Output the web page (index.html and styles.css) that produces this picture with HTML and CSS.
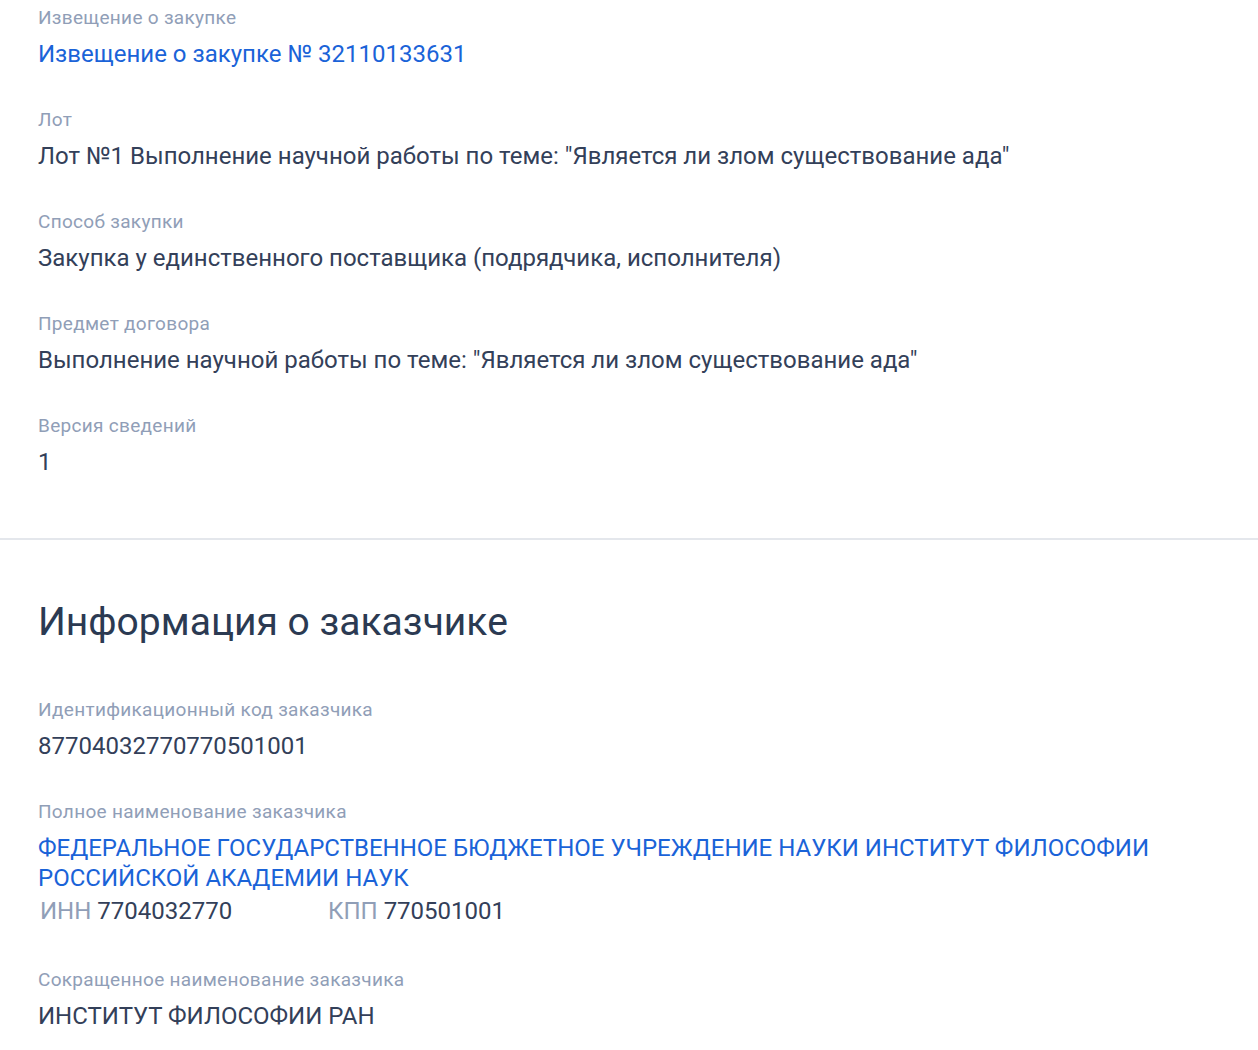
FILE: index.html
```html
<!DOCTYPE html>
<html lang="ru">
<head>
    <meta charset="UTF-8">
    <title>Извещение о закупке</title>
    <link rel="stylesheet" href="styles.css">
</head>
<body>
    <div class="section">
        <div class="field">
            <div class="field-label">Извещение о закупке</div>
            <div class="field-value"><a href="#">Извещение о закупке № 32110133631</a></div>
        </div>
        <div class="field">
            <div class="field-label">Лот</div>
            <div class="field-value">Лот №1 Выполнение научной работы по теме: "Является ли злом существование ада"</div>
        </div>
        <div class="field">
            <div class="field-label">Способ закупки</div>
            <div class="field-value">Закупка у единственного поставщика (подрядчика, исполнителя)</div>
        </div>
        <div class="field">
            <div class="field-label">Предмет договора</div>
            <div class="field-value">Выполнение научной работы по теме: "Является ли злом существование ада"</div>
        </div>
        <div class="field">
            <div class="field-label">Версия сведений</div>
            <div class="field-value">1</div>
        </div>
    </div>

    <div class="section section-customer">
        <h2>Информация о заказчике</h2>
        <div class="field">
            <div class="field-label">Идентификационный код заказчика</div>
            <div class="field-value">87704032770770501001</div>
        </div>
        <div class="field field-wide">
            <div class="field-label">Полное наименование заказчика</div>
            <div class="field-value"><a href="#">ФЕДЕРАЛЬНОЕ ГОСУДАРСТВЕННОЕ БЮДЖЕТНОЕ УЧРЕЖДЕНИЕ НАУКИ ИНСТИТУТ ФИЛОСОФИИ РОССИЙСКОЙ АКАДЕМИИ НАУК</a></div>
            <div class="requisites">
                <div class="req"><span class="req-name">ИНН</span> 7704032770</div>
                <div class="req"><span class="req-name">КПП</span> 770501001</div>
            </div>
        </div>
        <div class="field">
            <div class="field-label">Сокращенное наименование заказчика</div>
            <div class="field-value">ИНСТИТУТ ФИЛОСОФИИ РАН</div>
        </div>
    </div>
</body>
</html>
```

FILE: styles.css
```css
body {
    margin: 0;
    padding: 0;
    font-family: Roboto, "Liberation Sans", sans-serif;
    background: #fff;
    color: #334059;
}

.section {
    padding: 6px 38px 22px;
}

.section-customer {
    border-top: 2px solid #e4e7ec;
    padding-top: 60px;
}

h2 {
    margin: 0 0 54px;
    font-size: 39px;
    line-height: 44px;
    font-weight: 400;
    color: #2b3a52;
}

.field {
    margin-bottom: 39px;
}

.field-wide {
    margin-bottom: 42px;
}

.field-label {
    font-size: 19px;
    line-height: 24px;
    letter-spacing: 0.3px;
    color: #909eb7;
}

.field-value {
    margin-top: 9px;
    font-size: 24px;
    line-height: 30px;
}

.field-value a {
    color: #1a63d8;
    text-decoration: none;
}

.requisites {
    display: flex;
    margin-top: 3px;
    padding-left: 2px;
    font-size: 24px;
    line-height: 30px;
}

.req {
    width: 288px;
}

.req-name {
    color: #909eb7;
}
```
